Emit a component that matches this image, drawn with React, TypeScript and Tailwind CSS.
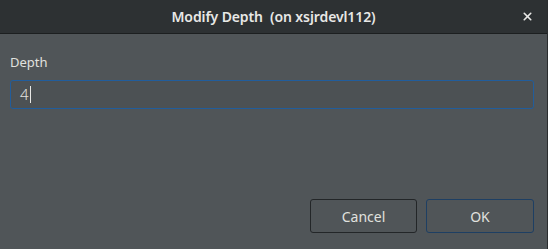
import { X } from 'lucide-react';

const App = () => {
	return (
		<div
			className="w-[548px] h-[249px] flex flex-col bg-[#505558] border-r border-[#2a2d2f] overflow-hidden"
			style={{ fontFamily: '"Noto Sans", "Open Sans", sans-serif' }}
		>
			{/* header bar */}
			<div className="relative h-[34px] shrink-0 flex items-center justify-center bg-[#2d3133] border-b border-[#1c1f20]">
				<span className="text-[14px] font-semibold text-[#e8e8e6] tracking-[-0.1px] whitespace-pre">
					Modify Depth  (on xsjrdevl112)
				</span>
				<button className="absolute right-[13px] top-[10px] text-[#e8e8e6]">
					<X size={13} strokeWidth={3} />
				</button>
			</div>

			<div className="flex-1 flex flex-col pl-[10px] pr-[13px]">
				<label className="mt-[19px] text-[13px] text-[#e0e1df] leading-[18px]">
					Depth
				</label>
				<div className="mt-[9px] h-[29px] flex items-center pl-[9px] rounded-[3px] border border-[#215d9c] bg-[#4c5154]">
					<span className="text-[15px] font-light text-[#e0e1df]">4</span>
					<span className="ml-[1px] w-px h-[17px] bg-[#e8e8e6]" />
				</div>

				<div className="mt-auto mb-[16px] flex justify-end gap-[9px]">
					<button className="w-[107px] h-[34px] rounded-[3px] border border-[#232628] bg-[#505558] text-[14px] text-[#e0e1df]">
						Cancel
					</button>
					<button className="w-[108px] h-[34px] rounded-[3px] border border-[#1e3f63] bg-[#505558] text-[14px] text-[#e0e1df]">
						OK
					</button>
				</div>
			</div>
		</div>
	);
};

export default App;
